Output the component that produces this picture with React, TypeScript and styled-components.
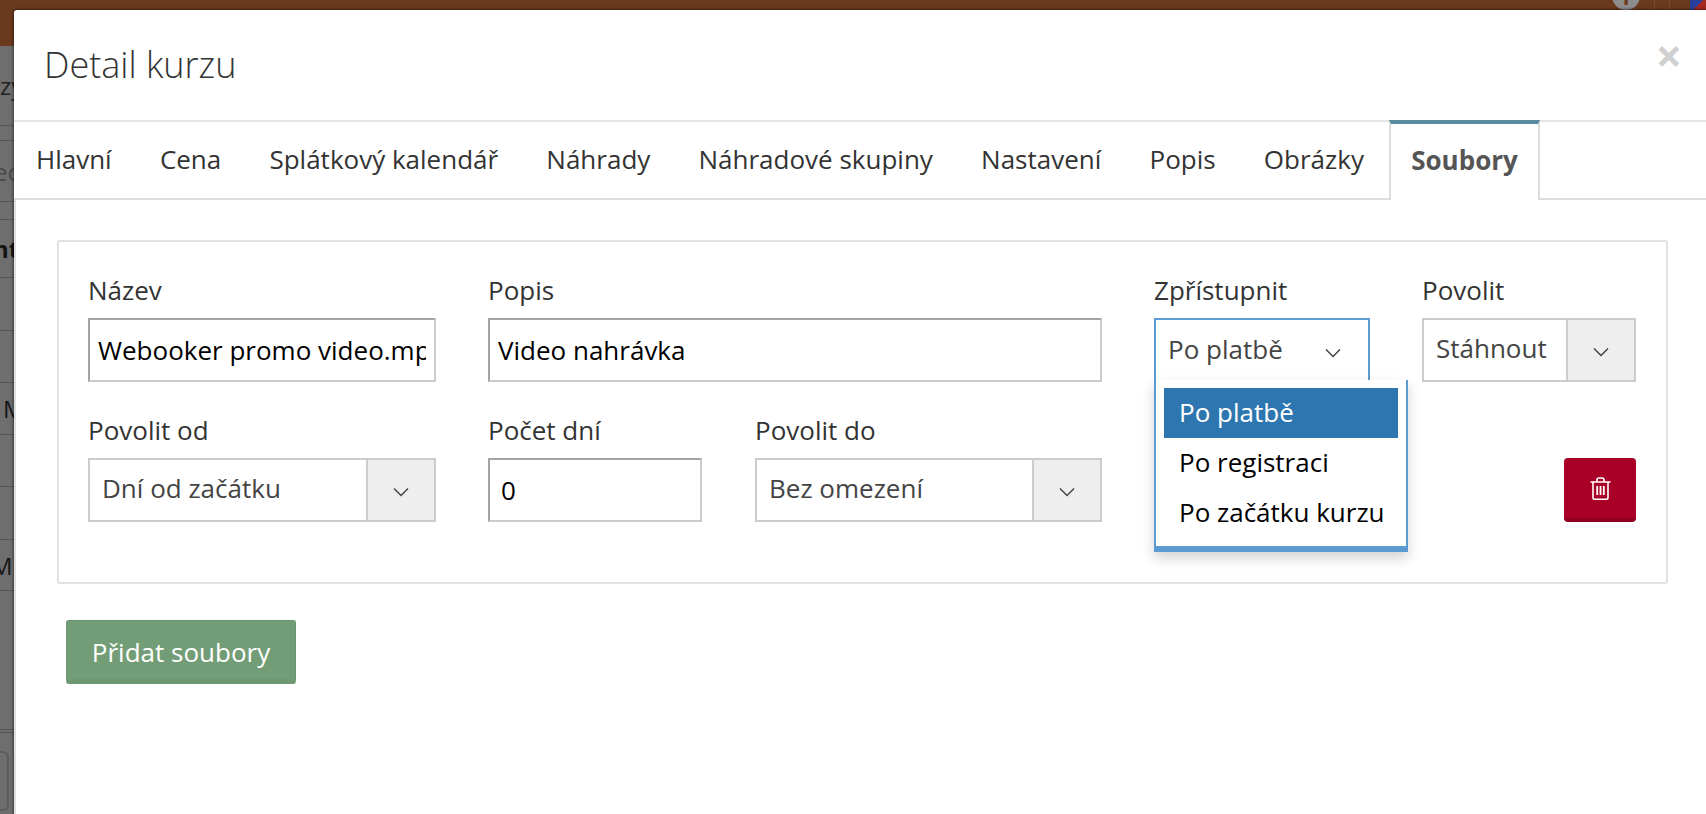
import styled, { createGlobalStyle } from 'styled-components';

const GlobalStyle = createGlobalStyle`
  html, body {
    margin: 0;
    padding: 0;
    height: 100%;
    overflow: hidden;
    background: #fff;
  }
  * { box-sizing: border-box; }
`;

const Chevron = () => (
  <svg width="16" height="10" viewBox="0 0 16 10" fill="none" stroke="#444" strokeWidth="1.5">
    <path d="M1 1.5l7 7 7-7" />
  </svg>
);

const Trash = () => (
  <svg width="21" height="23" viewBox="0 0 21 23" fill="none" stroke="#fff" strokeWidth="1.6">
    <path d="M0.5 5h20M3 5v15.5a1.7 1.7 0 0 0 1.7 1.7h11.6a1.7 1.7 0 0 0 1.7-1.7V5" />
    <path d="M7 5V3a2 2 0 0 1 2-2h3a2 2 0 0 1 2 2v2" />
    <path d="M7.2 9v9M10.5 9v9M13.8 9v9" strokeWidth="1.8" />
  </svg>
);

const tabs = ['Hlavní', 'Cena', 'Splátkový kalendář', 'Náhrady', 'Náhradové skupiny', 'Nastavení', 'Popis', 'Obrázky'];

// what still shows of the page behind the modal, top to bottom
const behind = [
  { h: 80, text: 'zy', x: 0, color: '#222', bold: false },
  { h: 15, text: '', x: 0, color: '', bold: false },
  { h: 61, text: 'ec', x: -6, color: '#4a4a4a', bold: false },
  { h: 18, text: '', x: 0, color: '', bold: false },
  { h: 58, text: 'nt', x: -7, color: '#151515', bold: true },
  { h: 53, text: '', x: 0, color: '', bold: false },
  { h: 52, text: '', x: 0, color: '', bold: false },
  { h: 52, text: 'M', x: 3, color: '#151515', bold: false },
  { h: 52, text: '', x: 0, color: '', bold: false },
  { h: 53, text: '', x: 0, color: '', bold: false },
  { h: 51, text: 'M', x: -9, color: '#151515', bold: false },
  { h: 139, text: '', x: 0, color: '', bold: false },
  { h: 3, text: '', x: 0, color: '', bold: false },
];

export default function App() {
  return (
    <>
      <GlobalStyle />
      <Page>
        <TopBar>
          <InfoCircle>i</InfoCircle>
          <BarDivider />
          <BarDivider />
          <Flag />
        </TopBar>
        <Backdrop>
          {behind.map((r, i) => (
            <BackdropRow key={i} $h={r.h}>
              {r.text && (
                <BackdropText $x={r.x} $color={r.color} $bold={r.bold}>
                  {r.text}
                </BackdropText>
              )}
            </BackdropRow>
          ))}
          <BackdropCard />
        </Backdrop>
        <Modal>
          <Header>
            <Title>Detail kurzu</Title>
            <Close>×</Close>
          </Header>
          <TabBar>
            {tabs.map((t) => (
              <Tab key={t}>{t}</Tab>
            ))}
            <ActiveTab>Soubory</ActiveTab>
          </TabBar>
          <Body>
            <Panel>
              <FormGrid>
                <Field $area="a">
                  <Label>Název</Label>
                  <TextInput readOnly value="Webooker promo video.mp4" />
                </Field>
                <Field $area="b">
                  <Label>Popis</Label>
                  <TextInput readOnly value="Video nahrávka" />
                </Field>
                <Field $area="c">
                  <Label>Zpřístupnit</Label>
                  <OpenSelect>
                    <span>Po platbě</span>
                    <Chevron />
                    <Dropdown>
                      <Option $selected>Po platbě</Option>
                      <Option>Po registraci</Option>
                      <Option>Po začátku kurzu</Option>
                    </Dropdown>
                  </OpenSelect>
                </Field>
                <Field $area="d">
                  <Label>Povolit</Label>
                  <Select>
                    <SelectValue>Stáhnout</SelectValue>
                    <SelectArrow><Chevron /></SelectArrow>
                  </Select>
                </Field>
                <Field $area="e">
                  <Label>Povolit od</Label>
                  <Select>
                    <SelectValue>Dní od začátku</SelectValue>
                    <SelectArrow><Chevron /></SelectArrow>
                  </Select>
                </Field>
                <MiddleRow>
                  <Field>
                    <Label>Počet dní</Label>
                    <NumberInput readOnly value="0" />
                  </Field>
                  <Field>
                    <Label>Povolit do</Label>
                    <Select>
                      <SelectValue>Bez omezení</SelectValue>
                      <SelectArrow><Chevron /></SelectArrow>
                    </Select>
                  </Field>
                </MiddleRow>
                <DeleteCell>
                  <DeleteButton><Trash /></DeleteButton>
                </DeleteCell>
              </FormGrid>
            </Panel>
            <AddButton>Přidat soubory</AddButton>
          </Body>
        </Modal>
      </Page>
    </>
  );
}

const font = `"Open Sans", "Noto Sans", sans-serif`;

const Page = styled.div`
  position: relative;
  width: 1706px;
  height: 814px;
  overflow: hidden;
  font-family: ${font};
`;

const TopBar = styled.div`
  height: 46px;
  background: #6b3a1e;
  display: flex;
  justify-content: flex-end;
  overflow: hidden;
`;

const InfoCircle = styled.div`
  width: 28px;
  height: 28px;
  margin: -18px 14px 0 0;
  border-radius: 50%;
  background: #8d8d8d;
  color: #6b3a1e;
  font-size: 22px;
  font-weight: 700;
  line-height: 28px;
  text-align: center;
`;

const BarDivider = styled.div`
  width: 1px;
  height: 46px;
  margin-right: 14px;
  background: #7a4a30;
`;

const Flag = styled.div`
  width: 16px;
  height: 10px;
  margin-left: 6px;
  background: linear-gradient(135deg, #2a3f9a 0 50%, #a5281f 50% 100%);
`;

const Backdrop = styled.div`
  height: 768px;
  background: #6e6e6e;
  overflow: hidden;
`;

const BackdropRow = styled.div<{ $h: number }>`
  height: ${(p) => p.$h}px;
  border-bottom: 1px solid #555;
  display: flex;
  align-items: center;
  width: 14px;
  overflow: hidden;
`;

const BackdropText = styled.span<{ $x: number; $color: string; $bold: boolean }>`
  margin-left: ${(p) => p.$x}px;
  color: ${(p) => p.$color};
  font-weight: ${(p) => (p.$bold ? 700 : 400)};
  font-size: 24px;
  white-space: nowrap;
`;

const BackdropCard = styled.div`
  width: 9px;
  height: 60px;
  margin-top: 18px;
  border: 2px solid #5c5c5c;
  border-left: none;
  border-radius: 0 6px 6px 0;
`;

const Modal = styled.div`
  position: absolute;
  left: 14px;
  top: 10px;
  right: 0;
  bottom: 0;
  background: #fff;
  border-top-left-radius: 3px;
  box-shadow: 0 0 3px 1px rgba(0, 0, 0, 0.45);
  display: flex;
  flex-direction: column;
`;

const Header = styled.div`
  flex: none;
  height: 112px;
  padding-left: 30px;
  display: flex;
  align-items: center;
  justify-content: space-between;
  border-bottom: 2px solid #e5e5e5;
`;

const Title = styled.h4`
  margin: -2px 0 0;
  font-size: 36px;
  font-weight: 300;
  color: #333;
`;

const Close = styled.div`
  font-size: 46px;
  font-weight: 700;
  color: #d0d0d0;
  line-height: 1;
  margin: -21px 24px 0 0;
`;

const TabBar = styled.div`
  flex: none;
  display: flex;
  height: 80px;
  margin-top: -2px;
  border-bottom: 2px solid #ddd;
`;

const Tab = styled.div`
  padding: 0 24.1px;
  display: flex;
  align-items: center;
  font-size: 26px;
  color: #333;
  white-space: nowrap;

  &:first-child {
    padding-left: 22px;
  }
`;

const ActiveTab = styled(Tab)`
  flex: none;
  width: 151px;
  height: 80px;
  margin-left: 1px;
  padding: 0 0 4px;
  justify-content: center;
  font-weight: 700;
  color: #555;
  background: #fff;
  border-top: 4px solid #5a8a9f;
  border-left: 2px solid #ddd;
  border-right: 2px solid #ddd;
`;

const Body = styled.div`
  flex: 1;
  padding: 40px 38px 0 41px;
  border-left: 2px solid #e0e0e0;
`;

const Panel = styled.div`
  height: 344px;
  border: 2px solid #e2e2e2;
  border-radius: 3px;
  padding: 28px 30px 0 29px;
`;

const FormGrid = styled.div`
  display: grid;
  grid-template-columns: 348px 614px 216px 214px;
  column-gap: 52px;
  row-gap: 28px;
  grid-template-areas:
    'a b c d'
    'e f . g';
`;

const Field = styled.div<{ $area?: string }>`
  display: flex;
  flex-direction: column;
  min-width: 0;
  ${(p) => p.$area && `grid-area: ${p.$area};`}
`;

const MiddleRow = styled.div`
  grid-area: f;
  display: grid;
  grid-template-columns: 214px 1fr;
  column-gap: 53px;
`;

const Label = styled.label`
  font-size: 26px;
  color: #333;
  height: 48px;
  line-height: 41px;
`;

const TextInput = styled.input`
  height: 64px;
  width: 100%;
  border: 2px solid #ccc;
  border-top-color: #a3a3a3;
  border-left-color: #a3a3a3;
  padding: 0 8px;
  font-family: ${font};
  font-size: 26px;
  color: #000;
  outline: none;
  background: #fff;
`;

const NumberInput = styled(TextInput)`
  padding-left: 11px;
`;

const Select = styled.div`
  display: flex;
  height: 64px;
  border: 2px solid #ccc;
  background: #fff;
`;

const SelectValue = styled.div`
  flex: 1;
  display: flex;
  align-items: center;
  padding: 0 11px 4px 12px;
  font-size: 26px;
  color: #444;
  white-space: nowrap;
`;

const SelectArrow = styled.div`
  flex: none;
  width: 68px;
  background: #eee;
  border-left: 2px solid #ccc;
  display: flex;
  align-items: center;
  justify-content: center;
  padding-top: 4px;
`;

const OpenSelect = styled.div`
  position: relative;
  height: 64px;
  width: 216px;
  border: 2px solid #5b9bd1;
  border-bottom: none;
  display: flex;
  align-items: center;
  justify-content: space-between;
  padding: 0 27px 4px 12px;
  font-size: 26px;
  color: #444;

  > svg {
    margin-top: 8px;
  }
`;

const Dropdown = styled.div`
  position: absolute;
  left: -2px;
  top: 60px;
  width: 254px;
  height: 172px;
  background: #fff;
  border: 2px solid #5b9bd1;
  border-top: none;
  border-bottom-width: 6px;
  padding: 8px;
  box-shadow: 0 6px 12px rgba(0, 0, 0, 0.175);
  z-index: 2;
`;

const Option = styled.div<{ $selected?: boolean }>`
  height: 50px;
  display: flex;
  align-items: center;
  padding: 0 0 2px 15px;
  font-size: 26px;
  white-space: nowrap;
  color: ${(p) => (p.$selected ? '#fff' : '#000')};
  background: ${(p) => (p.$selected ? '#2d76b0' : 'transparent')};
`;

const DeleteCell = styled.div`
  grid-area: g;
  display: flex;
  justify-content: flex-end;
  align-items: flex-end;
`;

const DeleteButton = styled.div`
  width: 72px;
  height: 64px;
  border-radius: 4px;
  background: #a80027;
  border-bottom: 4px solid #93001f;
  display: flex;
  align-items: center;
  justify-content: center;
`;

const AddButton = styled.div`
  margin: 36px 0 0 9px;
  width: 230px;
  height: 64px;
  padding-top: 3px;
  border-radius: 3px;
  background: #729d76;
  border: 1px solid #6b9570;
  border-bottom: 5px solid #6e9872;
  color: #fff;
  font-size: 26px;
  display: flex;
  align-items: center;
  justify-content: center;
`;
